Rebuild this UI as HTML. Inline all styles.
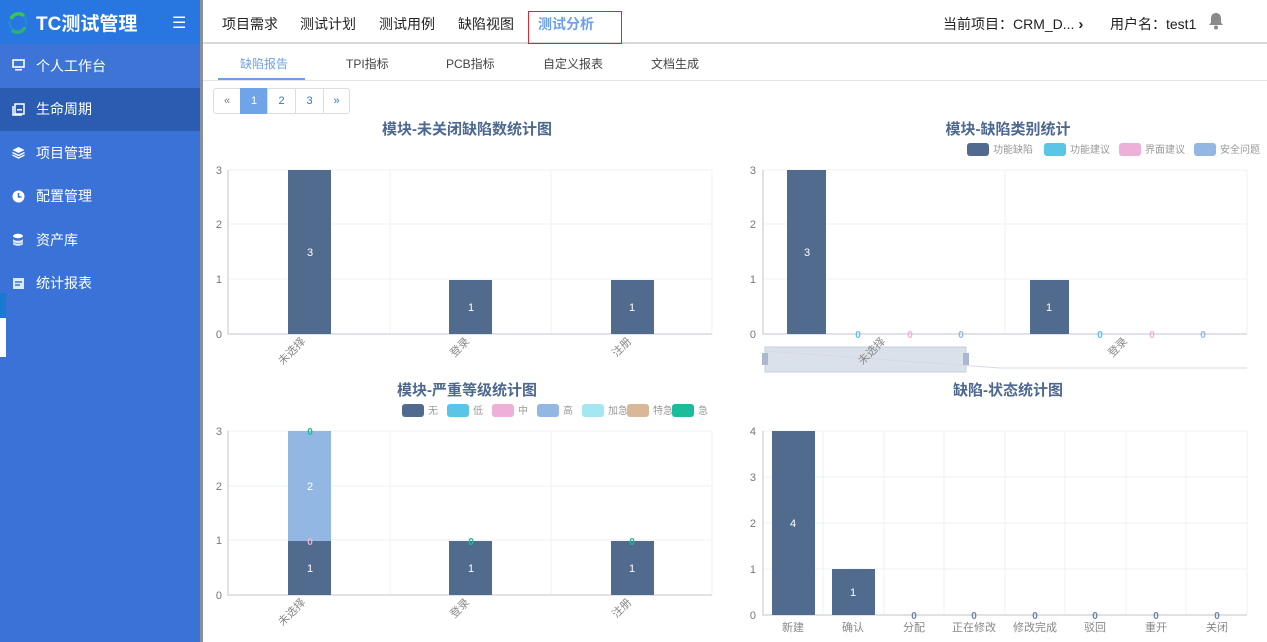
<!DOCTYPE html>
<html><head><meta charset="utf-8"><style>
*{margin:0;padding:0;box-sizing:border-box}
body{width:1267px;height:642px;overflow:hidden;background:#fff;font-family:"Liberation Sans","Noto Sans CJK SC",sans-serif;position:relative}
.abs{position:absolute}
#side{left:0;top:0;width:200px;height:642px;background:#3a72d8}
#side .hd{height:44px;background:#2877e0;color:#fff;font-size:19px;font-weight:bold;display:flex;align-items:center;padding-left:36px;position:relative}
.it{height:43.5px;color:#fff;font-size:14px;display:flex;align-items:center;padding-left:36px;position:relative}
.it svg{position:absolute;left:12px;top:15px}
#edge{left:200px;top:0;width:3px;height:642px;background:#8a8f98}
#top{left:203px;top:0;width:1064px;height:44px;background:#fff;border-bottom:2px solid #d8d8d8}
.nv{position:absolute;top:14px;font-size:14px;color:#222}
.st{position:absolute;top:55px;font-size:12px;color:#444}
.pg{position:absolute;top:88px;height:26px;border:1px solid #ddd;font-size:11px;color:#337ab7;display:flex;align-items:center;justify-content:center}
</style></head><body>
<div id="side" class="abs">
 <div class="hd"><svg class="abs" style="left:7px;top:12px" width="22" height="22" viewBox="0 0 22 22"><path d="M4 7 A8 8 0 0 1 17 4" stroke="#38c35a" stroke-width="3.5" fill="none"/><path d="M18 15 A8 8 0 0 1 5 18" stroke="#2cb07a" stroke-width="3.5" fill="none"/><path d="M3 9 A8 8 0 0 0 5 17" stroke="#1f8fd0" stroke-width="2" fill="none"/><path d="M19 13 A8 8 0 0 0 17 5" stroke="#1f8fd0" stroke-width="2" fill="none"/></svg>TC测试管理<span class="abs" style="left:172px;top:13px;font-size:16px;font-weight:normal">☰</span></div>
 <div class="it" style="background:#3d74d6"><svg width="13" height="12"><rect x="1" y="1" width="11" height="7" fill="none" stroke="#fff" stroke-width="1.6"/><rect x="3" y="10" width="7" height="1.5" fill="#fff"/></svg>个人工作台</div>
 <div class="it" style="background:#2a5cb2"><svg width="13" height="13"><rect x="3" y="1" width="9" height="10" fill="none" stroke="#fff" stroke-width="1.5"/><path d="M1 3v9h9" fill="none" stroke="#fff" stroke-width="1.5"/><rect x="5" y="6" width="5" height="1.5" fill="#fff"/></svg>生命周期</div>
 <div class="it"><svg width="13" height="13"><path d="M6.5 1L12.5 4L6.5 7L0.5 4Z" fill="#fff"/><path d="M0.5 6.5L6.5 9.5L12.5 6.5M0.5 9L6.5 12L12.5 9" fill="none" stroke="#fff" stroke-width="1.3"/></svg>项目管理</div>
 <div class="it"><svg width="13" height="13"><circle cx="6.5" cy="6.5" r="6" fill="#fff"/><path d="M6.5 3v4h3" fill="none" stroke="#3a72d8" stroke-width="1.5"/></svg>配置管理</div>
 <div class="it"><svg width="13" height="13"><ellipse cx="6" cy="3" rx="5" ry="2.2" fill="#fff"/><path d="M1 5.5c0 3 10 3 10 0v2.5c0 3-10 3-10 0zM1 8.5c0 3 10 3 10 0v2c0 3-10 3-10 0z" fill="#dfe8f8"/></svg>资产库</div>
 <div class="it"><svg width="13" height="13"><rect x="1" y="1" width="11" height="11" fill="#dfe8f8"/><path d="M3 5h7M3 8h5" stroke="#3a72d8" stroke-width="1.4"/></svg>统计报表</div>
 <div class="abs" style="left:0;top:293px;width:6px;height:25px;background:#1a79d0"></div>
 <div class="abs" style="left:0;top:318px;width:6px;height:39px;background:#fff"></div>
</div>
<div id="edge" class="abs"></div>
<div id="top" class="abs">
 <span class="nv" style="left:19px">项目需求</span><span class="nv" style="left:97px">测试计划</span><span class="nv" style="left:176px">测试用例</span><span class="nv" style="left:255px">缺陷视图</span>
 <span class="nv" style="left:335px;color:#6ea0e8;font-weight:bold">测试分析</span>
 <div class="abs" style="left:325px;top:11px;width:94px;height:33px;border:1px solid #e0252b"></div>
 <span class="nv" style="left:740px">当前项目：CRM_D... <b style="font-size:15px">›</b></span>
 <span class="nv" style="left:907px">用户名：test1</span>
 <svg class="abs" style="left:1005px;top:12px" width="16" height="18" viewBox="0 0 16 18"><path d="M8 1c-3.5 0-5 2.5-5 5.5v4L1 13h14l-2-2.5v-4C13 3.5 11.5 1 8 1z" fill="#8a8a8a"/><circle cx="8" cy="15.5" r="2" fill="#8a8a8a"/></svg>
</div>
<div class="abs" style="left:203px;top:80px;width:1064px;height:1px;background:#e4e4e4"></div>
<span class="st" style="left:240px;color:#6ea0e8">缺陷报告</span>
<div class="abs" style="left:218px;top:78px;width:87px;height:2px;background:#6ea0e8"></div>
<span class="st" style="left:346px">TPI指标</span><span class="st" style="left:446px">PCB指标</span><span class="st" style="left:543px">自定义报表</span><span class="st" style="left:651px">文档生成</span>
<div class="pg" style="left:213px;width:28px;color:#777;border-radius:3px 0 0 3px">«</div>
<div class="pg" style="left:240px;width:28px;background:#6fa4e8;color:#fff;border-color:#6fa4e8">1</div>
<div class="pg" style="left:267px;width:29px">2</div>
<div class="pg" style="left:295px;width:29px">3</div>
<div class="pg" style="left:323px;width:27px;border-radius:0 3px 3px 0">»</div>

<svg class="abs" style="left:0;top:0" width="1267" height="642" font-family="Liberation Sans,Noto Sans CJK SC,sans-serif">
<g font-size="15" font-weight="bold" fill="#4d6891" text-anchor="middle">
<text x="467" y="134">模块-未关闭缺陷数统计图</text><text x="1008" y="134">模块-缺陷类别统计</text>
<text x="467" y="395">模块-严重等级统计图</text><text x="1008" y="395">缺陷-状态统计图</text></g>
<g stroke="#eef0f3" stroke-width="1" fill="none">
<path d="M228 170H712M228 224H712M228 279H712M390 170V334M551 170V334M712 170V334"/>
<path d="M763 170H1247M763 224H1247M763 279H1247M1005 170V334M1247 170V334"/>
<path d="M228 431H712M228 486H712M228 540H712M390 431V595M551 431V595M712 431V595"/>
<path d="M763 431H1247M763 477H1247M763 523H1247M763 569H1247M823 431V615M884 431V615M944 431V615M1005 431V615M1065 431V615M1126 431V615M1186 431V615M1247 431V615"/></g>
<g stroke="#d5d9e0" stroke-width="1.5" fill="none"><path d="M228 170V334H712M763 170V334H1247M228 431V595H712M763 431V615H1247"/></g>
<g font-size="11" fill="#777" text-anchor="end">
<text x="222" y="174">3</text><text x="222" y="228">2</text><text x="222" y="283">1</text><text x="222" y="338">0</text>
<text x="756" y="174">3</text><text x="756" y="228">2</text><text x="756" y="283">1</text><text x="756" y="338">0</text>
<text x="222" y="435">3</text><text x="222" y="490">2</text><text x="222" y="544">1</text><text x="222" y="599">0</text>
<text x="756" y="435">4</text><text x="756" y="481">3</text><text x="756" y="527">2</text><text x="756" y="573">1</text><text x="756" y="619">0</text></g>
<g fill="#516b8f">
<rect x="288" y="170" width="43" height="164"/><rect x="449" y="280" width="43" height="54"/><rect x="611" y="280" width="43" height="54"/>
<rect x="787" y="170" width="39" height="164"/><rect x="1030" y="280" width="39" height="54"/>
<rect x="288" y="541" width="43" height="54"/><rect x="449" y="541" width="43" height="54"/><rect x="611" y="541" width="43" height="54"/>
<rect x="772" y="431" width="43" height="184"/><rect x="832" y="569" width="43" height="46"/></g>
<rect x="288" y="431" width="43" height="110" fill="#93b7e3"/>
<g font-size="11" fill="#fff" text-anchor="middle">
<text x="310" y="256">3</text><text x="471" y="311">1</text><text x="632" y="311">1</text><text x="807" y="256">3</text><text x="1049" y="311">1</text>
<text x="310" y="490">2</text><text x="310" y="572">1</text><text x="471" y="572">1</text><text x="632" y="572">1</text>
<text x="793" y="527">4</text><text x="853" y="596">1</text></g>
<g font-size="10" text-anchor="middle" font-weight="bold">
<g fill="#5bc5e5"><text x="858" y="338">0</text><text x="1100" y="338">0</text></g>
<g fill="#eeb0d8"><text x="910" y="338">0</text><text x="1152" y="338">0</text><text x="310" y="545">0</text></g>
<g fill="#93b7e3"><text x="961" y="338">0</text><text x="1203" y="338">0</text></g>
<g fill="#1abc9c"><text x="310" y="435">0</text><text x="471" y="545">0</text><text x="632" y="545">0</text></g>
<g fill="#6d84a8"><text x="914" y="619">0</text><text x="974" y="619">0</text><text x="1035" y="619">0</text><text x="1095" y="619">0</text><text x="1156" y="619">0</text><text x="1217" y="619">0</text></g></g>
<rect x="765" y="347" width="201" height="25" fill="#dbe1ea" stroke="#c5cedb"/>
<path d="M765 351L1000 368H1247" stroke="#d5dae2" fill="none"/>
<rect x="762" y="353" width="6" height="12" fill="#a9b8cf"/><rect x="963" y="353" width="6" height="12" fill="#a9b8cf"/>
<g font-size="11" fill="#888" text-anchor="end">
<text transform="translate(306,342) rotate(-45)">未选择</text><text transform="translate(470,342) rotate(-45)">登录</text><text transform="translate(632,342) rotate(-45)">注册</text>
<text transform="translate(886,342) rotate(-45)">未选择</text><text transform="translate(1128,342) rotate(-45)">登录</text>
<text transform="translate(306,603) rotate(-45)">未选择</text><text transform="translate(470,603) rotate(-45)">登录</text><text transform="translate(632,603) rotate(-45)">注册</text></g>
<g font-size="11" fill="#888" text-anchor="middle">
<text x="793" y="631">新建</text><text x="853" y="631">确认</text><text x="914" y="631">分配</text><text x="974" y="631">正在修改</text><text x="1035" y="631">修改完成</text><text x="1095" y="631">驳回</text><text x="1156" y="631">重开</text><text x="1217" y="631">关闭</text></g>
<g font-size="10" fill="#999">
<rect x="967" y="143" width="22" height="13" rx="3" fill="#516b8f"/><text x="993" y="153">功能缺陷</text>
<rect x="1044" y="143" width="22" height="13" rx="3" fill="#5bc5e5"/><text x="1070" y="153">功能建议</text>
<rect x="1119" y="143" width="22" height="13" rx="3" fill="#eeb0d8"/><text x="1145" y="153">界面建议</text>
<rect x="1194" y="143" width="22" height="13" rx="3" fill="#93b7e3"/><text x="1220" y="153">安全问题</text>
<rect x="402" y="404" width="22" height="13" rx="3" fill="#516b8f"/><text x="428" y="414">无</text>
<rect x="447" y="404" width="22" height="13" rx="3" fill="#5bc5e5"/><text x="473" y="414">低</text>
<rect x="492" y="404" width="22" height="13" rx="3" fill="#eeb0d8"/><text x="518" y="414">中</text>
<rect x="537" y="404" width="22" height="13" rx="3" fill="#93b7e3"/><text x="563" y="414">高</text>
<rect x="582" y="404" width="22" height="13" rx="3" fill="#a5e7f0"/><text x="608" y="414">加急</text>
<rect x="627" y="404" width="22" height="13" rx="3" fill="#d9b898"/><text x="653" y="414">特急</text>
<rect x="672" y="404" width="22" height="13" rx="3" fill="#1abc9c"/><text x="698" y="414">急</text></g>
</svg>
</body></html>
